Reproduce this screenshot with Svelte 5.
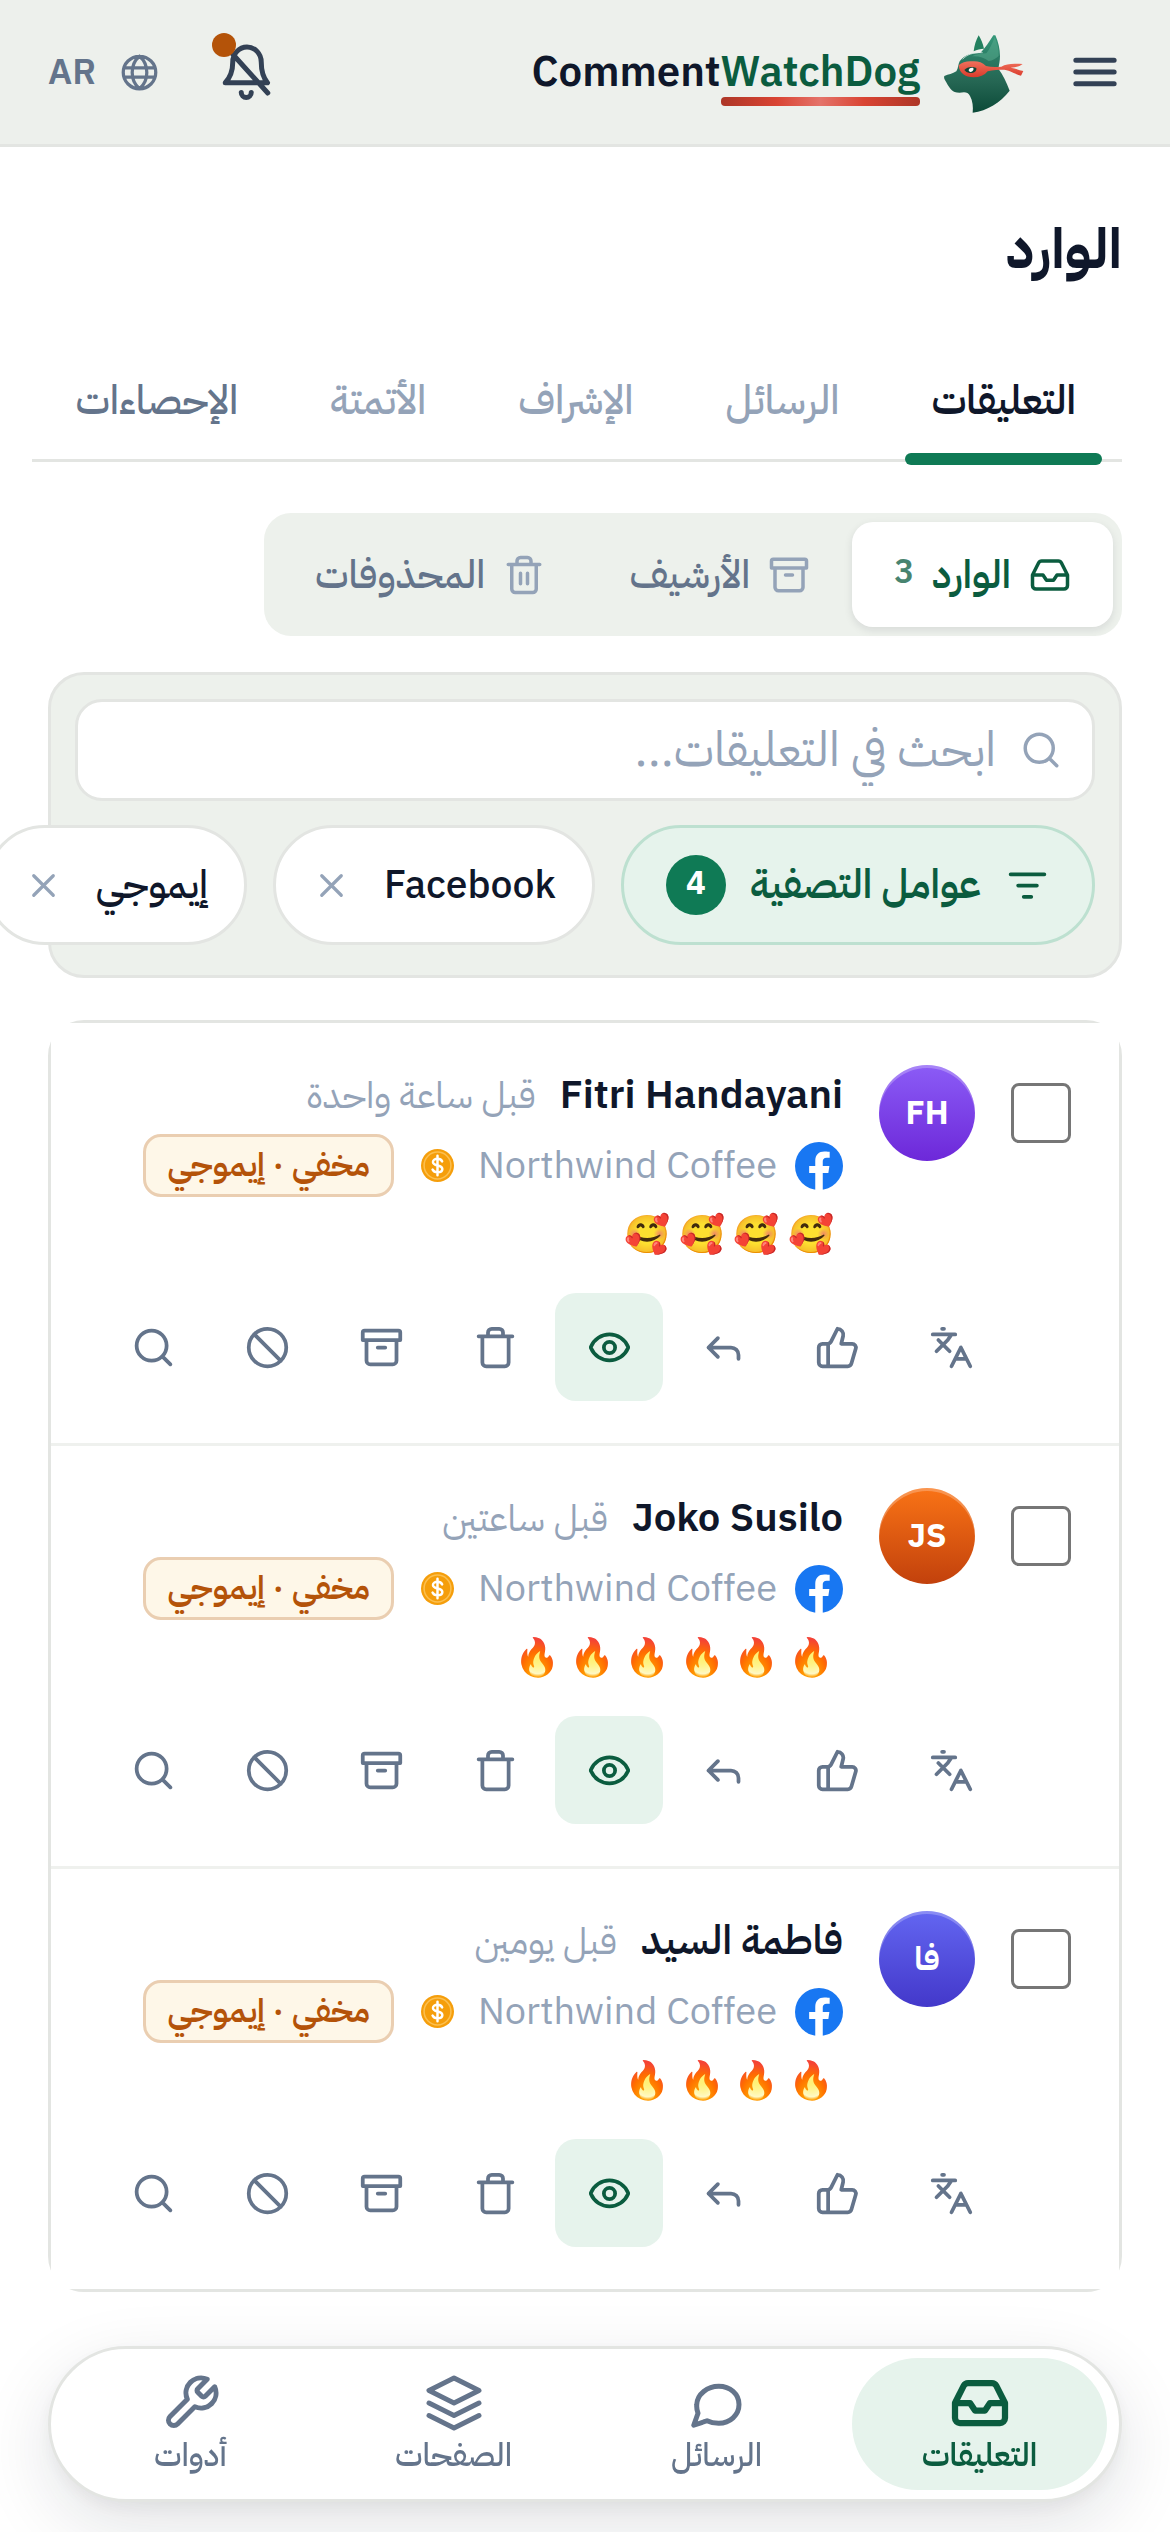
<script>
  let query = $state('');
  let activeTab = $state(0);
  let activeBox = $state('inbox');
  let selected = $state([]);
  let chips = $state(['Facebook', 'إيموجي']);

  const tabs = [
    { label: 'التعليقات' },
    { label: 'الرسائل', muted: true },
    { label: 'الإشراف', muted: true },
    { label: 'الأتمتة', muted: true },
    { label: 'الإحصاءات' }
  ];

  const boxes = [
    { id: 'inbox', label: 'الوارد', icon: 'inbox', count: 3 },
    { id: 'archive', label: 'الأرشيف', icon: 'archive' },
    { id: 'deleted', label: 'المحذوفات', icon: 'trashLines' }
  ];

  const comments = [
    { id: 1, name: 'Fitri Handayani', initials: 'FH', time: 'قبل ساعة واحدة', emoji: '🥰', count: 4, tone: 'violet' },
    { id: 2, name: 'Joko Susilo', initials: 'JS', time: 'قبل ساعتين', emoji: '🔥', count: 6, tone: 'orange' },
    { id: 3, name: 'فاطمة السيد', initials: 'فا', time: 'قبل يومين', emoji: '🔥', count: 4, tone: 'indigo' }
  ];

  const actions = [
    { icon: 'translate', label: 'ترجمة' },
    { icon: 'like', label: 'إعجاب' },
    { icon: 'reply', label: 'رد' },
    { icon: 'eye', label: 'إظهار', on: true },
    { icon: 'trash', label: 'حذف' },
    { icon: 'archive', label: 'أرشفة' },
    { icon: 'ban', label: 'حظر' },
    { icon: 'search', label: 'تفاصيل' }
  ];

  const nav = [
    { label: 'التعليقات', icon: 'inbox' },
    { label: 'الرسائل', icon: 'chat' },
    { label: 'الصفحات', icon: 'layers' },
    { label: 'أدوات', icon: 'wrench' }
  ];

  // 24x24 stroke icons
  const icons = {
    menu: 'M3.500 6.750h17M3.500 12h17M3.500 17.250h17',
    inbox: 'M22 12h-6l-2 3h-4l-2-3H2M5.450 5.110 2 12v6a2 2 0 0 0 2 2h16a2 2 0 0 0 2-2v-6l-3.450-6.890A2 2 0 0 0 16.760 4H7.240a2 2 0 0 0-1.790 1.110z',
    archive: 'M3 3h18a1 1 0 0 1 1 1v4H2V4a1 1 0 0 1 1-1zM4 8v11a2 2 0 0 0 2 2h12a2 2 0 0 0 2-2V8M10 12h4',
    trash: 'M3 6h18M19 6v14a2 2 0 0 1-2 2H7a2 2 0 0 1-2-2V6M8 6V4a2 2 0 0 1 2-2h4a2 2 0 0 1 2 2v2',
    trashLines: 'M3 6h18M19 6v14a2 2 0 0 1-2 2H7a2 2 0 0 1-2-2V6M8 6V4a2 2 0 0 1 2-2h4a2 2 0 0 1 2 2v2M10 11v6M14 11v6',
    search: 'M11 3a8 8 0 1 0 0 16 8 8 0 0 0 0-16zM21 21l-4.300-4.300',
    filter: 'M3 6h18M7 12h10M10 18h4',
    close: 'M18 6 6 18M6 6l12 12',
    translate: 'M5 8l6 6M4 14l6-6 2-3M2 5h12M7 2h1M22 22l-5-10-5 10M14 18h6',
    like: 'M7 10v12M15 5.880 14 10h5.830a2 2 0 0 1 1.920 2.560l-2.330 8A2 2 0 0 1 17.500 22H4a2 2 0 0 1-2-2v-8a2 2 0 0 1 2-2h2.760a2 2 0 0 0 1.790-1.110L12 2a3.130 3.130 0 0 1 3 3.880z',
    reply: 'M9 17l-5-5 5-5M4 12h12a4 4 0 0 1 4 4v2',
    eye: 'M2.100 12.300a1 1 0 0 1 0-.700 10.750 10.750 0 0 1 19.800 0 1 1 0 0 1 0 .700 10.750 10.750 0 0 1-19.800 0zM12 9a3 3 0 1 0 0 6 3 3 0 0 0 0-6z',
    ban: 'M12 2a10 10 0 1 0 0 20 10 10 0 0 0 0-20zM4.900 4.900l14.200 14.200',
    chat: 'M12.700 5.300c4.500 0 8.100 3.100 8.100 7.300s-3.600 7.500-8.100 7.500c-1.700 0-3.300-.3-4.700-1L2.700 20.900l1.700-4.800c-.4-1-.6-2.100-.5-3.500.2-4.200 4.300-7.300 8.800-7.300z',
    layers: 'M12 2 2 7l10 5 10-5-10-5zM2 17l10 5 10-5M2 12l10 5 10-5',
    wrench: 'M14.700 6.300a1 1 0 0 0 0 1.400l1.600 1.600a1 1 0 0 0 1.400 0l3.770-3.770a6 6 0 0 1-7.940 7.940l-6.910 6.910a2.120 2.120 0 0 1-3-3l6.910-6.910a6 6 0 0 1 7.940-7.940l-3.760 3.760z',
    globe: 'M12 2a10 10 0 1 0 0 20 10 10 0 0 0 0-20zM12 2c-6 5-6 15 0 20M12 2c6 5 6 15 0 20M2.500 9.200h19M2.500 14.800h19',
    bell: 'M10.100 20.200a2 2 0 0 0 4 0M6.700 4.900l14 15.500M6.700 8a5.700 6 0 0 1 11.400 0c0 3.600.800 6.300 2.500 8.300H3.700c2-2.100 3-5 3-8.300z'
  };

  function removeChip(chip) {
    chips = chips.filter((c) => c !== chip);
  }
</script>

{#snippet icon(name)}
  <svg class="icon" viewBox="0 0 24 24" aria-hidden="true"><path d={icons[name]} /></svg>
{/snippet}

<div class="app" dir="rtl" lang="ar">
  <header>
    <button class="plain menu" aria-label="القائمة">{@render icon('menu')}</button>
    <a class="brand" href="/" dir="ltr">
      <span class="word">Comment<span class="accent">WatchDog</span></span>
      <svg class="logo" viewBox="0 0 300 300" aria-hidden="true">
        <defs>
          <linearGradient id="fur" x1="0" y1="0" x2="0" y2="1">
            <stop offset="0" stop-color="#35997a" />
            <stop offset="0.3" stop-color="#2a7a63" />
            <stop offset="0.6" stop-color="#256653" />
            <stop offset="1" stop-color="#0b4a38" />
          </linearGradient>
          <linearGradient id="band" x1="0" y1="0" x2="0" y2="1">
            <stop offset="0" stop-color="#f0705c" />
            <stop offset="1" stop-color="#d93a2b" />
          </linearGradient>
        </defs>
        <path d="M131 40c7 12 13 25 16 40-11 0-21 3-31 8 2-18 7-34 15-48z" fill="#23805f" />
        <path d="M181 40c9 20 14 42 14 62 0 15-3 26-5 38 14 18 24 40 34 66-28 36-67 60-111 66 2-18 0-35-8-50-4-8-10-11-18-11-10 2-20 2-28-1-12-4-20-20-27-32-4-6-6-12-4-16 12-5 25-6 36-14 6-8 5-20 10-30 12-18 34-26 62-25 14-14 27-34 39-53z" fill="url(#fur)" />
        <path d="M179 46c8 18 13 36 12 56-8 8-18 14-30 15-14-10-32-16-50-14 12-7 28-9 43-9 10-12 18-30 25-48z" fill="#57a98d" opacity="0.55" />
        <path d="M83 112c12-14 30-21 60-20" fill="none" stroke="#dff0e8" stroke-width="3" opacity="0.7" />
        <path d="M71 130c10-10 24-13 42-12 16-1 28 3 40 14 14 4 30 4 46 2 16-10 36-10 64-8-10 8-22 10-36 11 14 2 26 8 38 10l-7 14c-16-3-26-14-50-18-18 0-32 1-50 5-10 12-24 18-42 18-26 0-44-14-45-36z" fill="url(#band)" />
        <path d="M88 144c8-10 24-12 36-6 2 10-8 16-20 15-8-1-12-4-16-9z" fill="#0f4435" />
        <path d="M101 144c2-6 8-8 14-6 2 6-2 11-8 12-4-1-6-3-6-6z" fill="#fff" />
      </svg>
    </a>
    <span class="spacer"></span>
    <button class="plain bell" aria-label="الإشعارات">{@render icon('bell')}<span class="dot"></span></button>
    <button class="plain lang">{@render icon('globe')}<span>AR</span></button>
  </header>

  <main>
    <h1>الوارد</h1>

    <nav class="tabs" aria-label="الأقسام">
      {#each tabs as tab, i}
        <button class:active={activeTab === i} class:muted={tab.muted} onclick={() => (activeTab = i)}>{tab.label}</button>
      {/each}
    </nav>

    <div class="boxes">
      {#each boxes as box}
        <button class:active={activeBox === box.id} onclick={() => (activeBox = box.id)}>
          {@render icon(box.icon)}
          <span>{box.label}</span>
          {#if box.count}<small>{box.count}</small>{/if}
        </button>
      {/each}
    </div>

    <section class="filters">
      <label class="search">
        {@render icon('search')}
        <input type="text" bind:value={query} placeholder="ابحث في التعليقات..." aria-label="ابحث في التعليقات" />
      </label>
      <div class="chips">
        <button class="chip filter">
          {@render icon('filter')}
          <span>عوامل التصفية</span>
          <b>4</b>
        </button>
        {#each chips as chip}
          <button class="chip" onclick={() => removeChip(chip)}>
            <span>{chip}</span>
            {@render icon('close')}
          </button>
        {/each}
      </div>
    </section>

    <section class="list">
      {#each comments as comment (comment.id)}
        <article>
          <input type="checkbox" value={comment.id} bind:group={selected} aria-label={comment.name} />
          <div class="avatar {comment.tone}">{comment.initials}</div>
          <div class="body">
            <div class="who"><strong>{comment.name}</strong><time>{comment.time}</time></div>
            <div class="meta">
              <svg class="facebook" viewBox="0 0 24 24" aria-hidden="true">
                <circle cx="12" cy="12" r="12" fill="#1877f2" />
                <path d="M10.130 24v-8.450H7.080V12h3.050V9.360c0-3.010 1.790-4.670 4.530-4.670 1.310 0 2.680.230 2.680.230v2.950h-1.510c-1.490 0-1.950.930-1.950 1.870V12h3.320l-.530 3.470h-2.790V24z" fill="#fff" />
              </svg>
              <span class="page">Northwind Coffee</span>
              <svg class="coin" viewBox="0 0 32 32" aria-hidden="true">
                <circle cx="16" cy="16" r="16" fill="#f59e0b" />
                <circle cx="16" cy="16" r="13" fill="none" stroke="#fbbf50" stroke-width="1.500" />
                <path d="M20.500 12c-.8-1.700-2.400-2.500-4.500-2.500-2.600 0-4.400 1.200-4.400 3.100 0 4.600 9.100 2.200 9.100 6.800 0 2-1.900 3.200-4.700 3.200-2.300 0-4-.9-4.800-2.700M16 6.500v19" fill="none" stroke="#fff" stroke-width="2.400" stroke-linecap="round" />
              </svg>
              <span class="tag">مخفي · إيموجي</span>
            </div>
            <p>{Array(comment.count).fill(comment.emoji).join(' ')}</p>
          </div>
          <div class="actions">
            {#each actions as action}
              <button class="plain" class:on={action.on} aria-label={action.label}>{@render icon(action.icon)}</button>
            {/each}
          </div>
        </article>
      {/each}
    </section>
  </main>

  <nav class="bottom" aria-label="التنقل">
    {#each nav as item, i}
      <a href="/" class:active={i === 0}>{@render icon(item.icon)}<span>{item.label}</span></a>
    {/each}
  </nav>
</div>

<style>
  :global(body) {
    background: #fff;
  }

  .app {
    font-family: 'IBM Plex Sans Arabic', 'IBM Plex Sans', Inter, 'DejaVu Sans', sans-serif;
    color: #0f172a;
    overflow-x: clip;
  }

  .app :global(*) {
    box-sizing: border-box;
  }

  button,
  input {
    font: inherit;
    color: inherit;
  }

  button {
    border: 0;
    background: none;
    padding: 0;
    cursor: pointer;
    white-space: nowrap;
  }

  a {
    color: inherit;
    text-decoration: none;
  }

  .icon {
    width: 42px;
    height: 42px;
    flex: none;
    fill: none;
    stroke: currentColor;
    stroke-width: 2;
    stroke-linecap: round;
    stroke-linejoin: round;
  }

  .plain {
    display: flex;
    align-items: center;
    justify-content: center;
  }

  header {
    height: 147px;
    display: flex;
    align-items: center;
    padding: 0 48px;
    background: #edf0ec;
    border-bottom: 3px solid #e3e5e2;
  }

  .menu {
    color: #334155;
  }

  .menu .icon {
    width: 54px;
    height: 54px;
    stroke-width: 2.25;
  }

  .brand {
    display: flex;
    align-items: center;
    gap: 15px;
    margin-right: 33px;
  }

  .word {
    font-size: 42px;
    font-weight: 600;
    line-height: 60px;
  }

  .accent {
    position: relative;
    color: #0b5c3f;
  }

  .accent::after {
    content: '';
    position: absolute;
    left: 0;
    right: 0;
    bottom: -3px;
    height: 9px;
    border-radius: 4px;
    background: linear-gradient(90deg, #ad3627, #d94433 28%, #e4736a 50%, #d94433 72%, #ad3627);
  }

  .logo {
    width: 100px;
    height: 100px;
  }

  .spacer {
    flex: 1;
  }

  .bell {
    position: relative;
    color: #334155;
  }

  .bell .icon {
    width: 60px;
    height: 60px;
  }

  .dot {
    position: absolute;
    top: -9px;
    left: -4px;
    width: 24px;
    height: 24px;
    border-radius: 50%;
    background: #b45309;
  }

  .lang {
    margin-right: 57px;
    gap: 24px;
    color: #64748b;
    font-size: 36px;
    font-weight: 600;
  }

  .lang .icon {
    width: 39px;
    height: 39px;
  }

  main {
    padding: 0 48px 240px;
  }

  h1 {
    margin: 60px 0 57px;
    font-size: 56px;
    line-height: 84px;
  }

  .tabs {
    display: flex;
    margin-left: -16px;
    border-bottom: 3px solid #e3e5e2;
  }

  .tabs button {
    position: relative;
    height: 111px;
    padding: 0 46px 6px;
    font-size: 40px;
    font-weight: 500;
    color: #64748b;
  }

  .tabs .muted {
    color: #94a3b8;
  }

  .tabs .active {
    color: #0f172a;
    font-weight: 600;
  }

  .tabs .active::after {
    content: '';
    position: absolute;
    left: 20px;
    right: 20px;
    bottom: -6px;
    height: 12px;
    border-radius: 6px;
    background: #0f7a55;
  }

  .boxes {
    display: flex;
    width: fit-content;
    margin-top: 51px;
    padding: 9px;
    border-radius: 27px;
    background: #edf1ec;
  }

  .boxes button {
    display: flex;
    align-items: center;
    gap: 18px;
    height: 105px;
    padding: 0 42px;
    border-radius: 21px;
    font-size: 39px;
    font-weight: 500;
    color: #64748b;
  }

  .boxes .icon {
    color: #94a3b8;
  }

  .boxes .active {
    background: #fff;
    color: #0b5c3f;
    font-weight: 600;
    box-shadow: 0 3px 9px rgba(15, 23, 42, 0.1);
  }

  .boxes .active .icon {
    color: #0b5c3f;
  }

  .boxes small {
    padding-bottom: 6px;
    font-size: 33px;
    opacity: 0.75;
  }

  .filters {
    margin-top: 36px;
    padding: 24px 24px 30px;
    border: 3px solid #e3e5e2;
    border-radius: 36px;
    background: #edf1ec;
  }

  .search {
    display: flex;
    align-items: center;
    height: 102px;
    padding: 0 30px;
    gap: 24px;
    border: 3px solid #e3e5e2;
    border-radius: 27px;
    background: #fff;
    color: #94a3b8;
  }

  .search input {
    flex: 1;
    min-width: 0;
    padding: 0;
    border: 0;
    outline: 0;
    background: none;
    color: #0f172a;
    font-size: 48px;
  }

  .search input::placeholder {
    color: #94a3b8;
    opacity: 1;
  }

  .chips {
    display: flex;
    gap: 26px;
    margin-top: 24px;
  }

  .chip {
    display: flex;
    align-items: center;
    flex: none;
    gap: 33px;
    height: 120px;
    padding: 0 36px;
    border: 3px solid #e3e5e2;
    border-radius: 60px;
    background: #fff;
    font-size: 39px;
    font-weight: 500;
  }

  .chip .icon {
    width: 39px;
    height: 39px;
    color: #94a3b8;
  }

  .chip.filter {
    gap: 24px;
    padding: 0 42px;
    border-color: #bde0d0;
    background: #e6f3ec;
    color: #0b5c3f;
    font-size: 40px;
    font-weight: 600;
  }

  .chip.filter .icon {
    width: 45px;
    height: 45px;
    color: #0b5c3f;
  }

  .chip b {
    width: 60px;
    height: 60px;
    border-radius: 50%;
    background: #0f7a55;
    color: #fff;
    font-size: 33px;
    font-weight: 700;
    line-height: 57px;
  }

  .list {
    margin-top: 42px;
    border: 3px solid #e3e5e2;
    border-radius: 36px;
  }

  article {
    display: grid;
    grid-template-columns: 60px 96px 1fr;
    column-gap: 36px;
    padding: 42px 48px;
    background: #fff;
  }

  article + article {
    border-top: 3px solid #eff1ee;
  }

  article input {
    appearance: none;
    width: 60px;
    height: 60px;
    margin: 18px 0 0;
    border: 3px solid #767676;
    border-radius: 8px;
    background: #fff;
  }

  article input:checked {
    background: #0f7a55;
  }

  .avatar {
    display: flex;
    align-items: center;
    justify-content: center;
    height: 96px;
    border-radius: 50%;
    box-shadow: inset 0 3px rgba(255, 255, 255, 0.25);
    color: #fff;
    font-size: 33px;
    font-weight: 700;
  }

  .violet {
    background: linear-gradient(#8b5cf6, #6d28d9);
  }

  .orange {
    background: linear-gradient(#f97316, #c2410c);
  }

  .indigo {
    background: linear-gradient(#6366f1, #4338ca);
  }

  .who {
    display: flex;
    align-items: baseline;
    gap: 24px;
    height: 60px;
    font-size: 40px;
    line-height: 60px;
  }

  .who strong {
    font-weight: 600;
  }

  .who time {
    color: #94a3b8;
    font-size: 37px;
  }

  .meta {
    display: flex;
    align-items: center;
    height: 63px;
    margin-top: 9px;
    font-size: 38px;
  }

  .facebook {
    width: 48px;
    height: 48px;
  }

  .page {
    margin: 0 18px 0 24px;
    color: #94a3b8;
    line-height: 57px;
  }

  .coin {
    width: 33px;
    height: 33px;
  }

  .tag {
    margin-right: 27px;
    padding: 0 21px;
    border: 3px solid #eaceb1;
    border-radius: 18px;
    background: #fef7e8;
    color: #b45309;
    font-size: 33px;
    font-weight: 600;
    line-height: 57px;
  }

  p {
    margin: 6px 0 0;
    padding: 0 9px;
    font-size: 37px;
    line-height: 63px;
  }

  .actions {
    grid-column: 1 / -1;
    display: flex;
    justify-content: flex-end;
    gap: 6px;
    margin-top: 27px;
    color: #64748b;
  }

  .actions button {
    width: 108px;
    height: 108px;
    border-radius: 21px;
  }

  .actions .icon {
    width: 45px;
    height: 45px;
  }

  .actions .on {
    background: #e6f3ec;
    color: #0b5c3f;
  }

  .bottom {
    position: fixed;
    right: 48px;
    bottom: 30px;
    left: 48px;
    display: flex;
    gap: 8px;
    padding: 9px 12px;
    border: 3px solid #e3e5e2;
    border-radius: 78px;
    background: #fff;
    box-shadow: 0 24px 72px rgba(15, 23, 42, 0.12), 0 6px 18px rgba(15, 23, 42, 0.05);
  }

  .bottom a {
    flex: 1;
    display: flex;
    flex-direction: column;
    align-items: center;
    height: 132px;
    padding-top: 15px;
    border-radius: 66px;
    color: #64748b;
    font-size: 32px;
    font-weight: 500;
    line-height: 45px;
  }

  .bottom .icon {
    width: 60px;
    height: 60px;
  }

  .bottom .active {
    background: #e6f3ec;
    color: #0b5c3f;
    font-weight: 600;
  }

  .bottom .active .icon {
    stroke-width: 2.5;
  }
</style>
